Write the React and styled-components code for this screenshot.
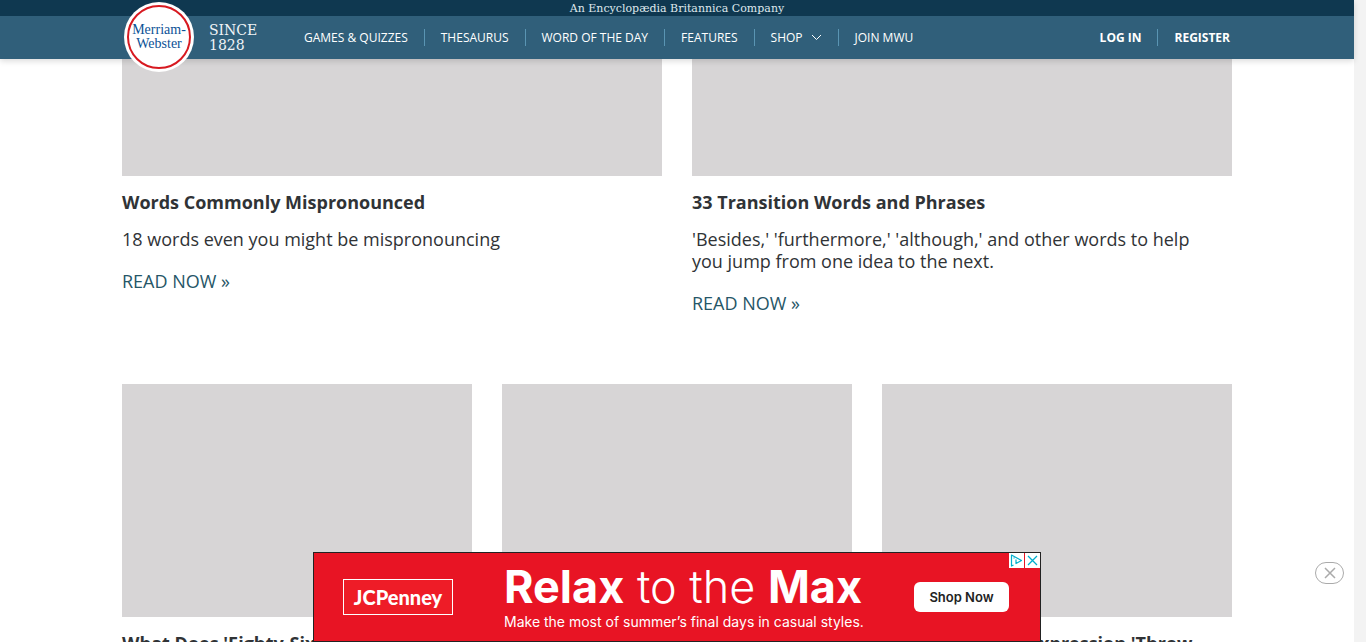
import React from "react";
import styled, { createGlobalStyle } from "styled-components";

const GlobalStyle = createGlobalStyle`
  *, *::before, *::after { box-sizing: border-box; }
  html, body { margin: 0; padding: 0; }
  body {
    background: #fff;
    color: #303336;
    font-family: "Open Sans", sans-serif;
    overflow: hidden;
  }
  a { color: inherit; text-decoration: none; }
  button { font: inherit; cursor: pointer; }
`;

const Shell = styled.div`
  display: grid;
  grid-template-columns: minmax(0, 1fr) 12px;
  height: 100vh;
  overflow: hidden;
`;

const Page = styled.div`
  min-width: 0;
`;

const ScrollTrack = styled.div`
  background: #f3f3f3;
`;

const Header = styled.header`
  position: relative;
  z-index: 2;
  background: #305f7a;
  box-shadow: 0 2px 6px rgba(0, 0, 0, 0.15);
`;

const TopStrip = styled.div`
  height: 16px;
  background: #0f3850;
  color: #dfe8ed;
  font-family: "DejaVu Serif", serif;
  font-size: 11px;
  line-height: 18px;
  text-align: center;
`;

const Bar = styled.div`
  display: flex;
  align-items: center;
  max-width: 1110px;
  height: 43px;
  margin: 0 auto;
  padding: 0 2px;
`;

const Logo = styled.a`
  display: flex;
  align-items: center;
  justify-content: center;
  width: 70px;
  height: 70px;
  flex: none;
  margin-bottom: 1px;
  border-radius: 50%;
  background: #fff;
`;

const LogoRing = styled.span`
  display: flex;
  flex-direction: column;
  align-items: center;
  justify-content: center;
  width: 64px;
  height: 64px;
  border: 2px solid #d71920;
  border-radius: 50%;
  color: #0b5296;
  font-family: "Liberation Serif", serif;
  font-size: 14px;
  line-height: 14px;
`;

const Since = styled.div`
  width: 80px;
  margin-left: 15px;
  color: #f0f4f6;
  font-family: "DejaVu Serif", serif;
  font-size: 14px;
  line-height: 15px;
`;

const NavList = styled.ul`
  display: flex;
  align-items: center;
  margin: 0;
  margin-left: ${(p) => (p.$end ? "auto" : "0")};
  padding: 0;
  list-style: none;
  color: #fff;
  font-size: 12px;
  font-weight: ${(p) => (p.$end ? 700 : 400)};
  line-height: 17px;
`;

const NavItem = styled.li`
  display: flex;
  padding: 0 16px;
  white-space: nowrap;

  & + & { border-left: 1px solid #5a95b3; }
  &:first-child { padding-left: 15px; }
  &:last-child { padding-right: 0; }
`;

const NavLink = styled.a`
  display: flex;
  align-items: center;
  gap: 8px;
`;

const Container = styled.main`
  max-width: 1110px;
  margin: 0 auto;
`;

const CardGrid = styled.section`
  display: grid;
  grid-template-columns: repeat(${(p) => p.$columns}, minmax(0, 1fr));
  gap: 30px;
  margin-bottom: 70px;
`;

const Thumb = styled.div`
  height: ${(p) => p.$height}px;
  background: #d7d5d6;
`;

const CardTitle = styled.h2`
  margin: 15px 0;
  font-size: 18px;
  font-weight: 700;
  line-height: 22px;
`;

const CardText = styled.p`
  margin: 0 0 20px;
  padding-right: 20px;
  font-size: 18px;
  line-height: 22px;
`;

const ReadLink = styled.a`
  display: block;
  color: #265667;
  font-size: 18px;
  line-height: 22px;
`;

const AdDock = styled.aside`
  position: fixed;
  right: 12px;
  bottom: 0;
  left: 0;
  z-index: 3;
  display: flex;
  justify-content: center;
`;

const Ad = styled.div`
  position: relative;
  display: flex;
  align-items: center;
  width: 728px;
  height: 90px;
  padding: 0 31px 0 29px;
  border: 1px solid #222;
  background: #e81424;
  color: #fff;
  font-family: Inter, sans-serif;
`;

const AdBrand = styled.div`
  display: flex;
  align-items: center;
  justify-content: center;
  width: 110px;
  height: 36px;
  border: 1px solid #fff;
  background: #ee1c27;
  font-family: Lato, sans-serif;
  font-size: 20px;
  font-weight: 900;
`;

const AdCopy = styled.div`
  flex: 1;
  margin-left: 51px;
  white-space: nowrap;
`;

const AdHeadline = styled.div`
  font-size: 45px;
  font-weight: 300;
  line-height: 50px;

  strong { font-weight: 700; }
`;

const AdTagline = styled.div`
  font-size: 14px;
  line-height: 20px;
`;

const AdButton = styled.button`
  width: 95px;
  height: 30px;
  padding: 0;
  border: 0;
  border-radius: 6px;
  background: #fff;
  color: #222;
  font-size: 13px;
  font-weight: 600;
`;

const AdControls = styled.div`
  position: absolute;
  top: 0;
  right: 0;
  display: flex;
  gap: 1px;
`;

const AdControl = styled.button`
  display: flex;
  width: 15px;
  height: 15px;
  padding: 0;
  border: 0;
  background: #fff;
`;

const DismissButton = styled.button`
  position: absolute;
  right: 10px;
  bottom: 58px;
  display: flex;
  align-items: center;
  justify-content: center;
  width: 29px;
  height: 22px;
  padding: 0;
  border: 1px solid #aaa;
  border-radius: 11px;
  background: #fff;
`;

const NAV = ["Games & Quizzes", "Thesaurus", "Word of the Day", "Features", "Shop", "Join MWU"];

const FEATURES = [
  { title: "Words Commonly Mispronounced", text: "18 words even you might be mispronouncing" },
  {
    title: "33 Transition Words and Phrases",
    text: "'Besides,' 'furthermore,' 'although,' and other words to help you jump from one idea to the next.",
  },
];

const STORIES = ["What Does 'Eighty-Six' Mean?", "", "Where Does the Expression 'Throw Shade' Come From?"];

function Chevron() {
  return (
    <svg width="11" height="7" viewBox="0 0 11 7" fill="none" stroke="#fff" aria-hidden="true">
      <path d="M1 1l4.500 4.500L10 1" />
    </svg>
  );
}

export default function App() {
  return (
    <>
      <GlobalStyle />
      <Shell>
        <Page>
          <Header>
            <TopStrip>An Encyclopædia Britannica Company</TopStrip>
            <Bar>
              <Logo href="#">
                <LogoRing>
                  <span>Merriam-</span>
                  <span>Webster</span>
                </LogoRing>
              </Logo>
              <Since>
                SINCE
                <br />
                1828
              </Since>
              <nav>
                <NavList>
                  {NAV.map((name) => (
                    <NavItem key={name}>
                      <NavLink href="#">
                        {name.toUpperCase()}
                        {name === "Shop" && <Chevron />}
                      </NavLink>
                    </NavItem>
                  ))}
                </NavList>
              </nav>
              <NavList $end>
                <NavItem><NavLink href="#">LOG IN</NavLink></NavItem>
                <NavItem><NavLink href="#">REGISTER</NavLink></NavItem>
              </NavList>
            </Bar>
          </Header>
          <Container>
            <CardGrid $columns={2}>
              {FEATURES.map((f) => (
                <article key={f.title}>
                  <Thumb $height={117} />
                  <CardTitle>{f.title}</CardTitle>
                  <CardText>{f.text}</CardText>
                  <ReadLink href="#">READ NOW »</ReadLink>
                </article>
              ))}
            </CardGrid>
            <CardGrid $columns={3}>
              {STORIES.map((title, i) => (
                <article key={i}>
                  <Thumb $height={233} />
                  {title && <CardTitle>{title}</CardTitle>}
                </article>
              ))}
            </CardGrid>
          </Container>
        </Page>
        <ScrollTrack />
      </Shell>
      <AdDock>
        <Ad>
          <AdBrand>JCPenney</AdBrand>
          <AdCopy>
            <AdHeadline><strong>Relax</strong> to the <strong>Max</strong></AdHeadline>
            <AdTagline>Make the most of summer’s final days in casual styles.</AdTagline>
          </AdCopy>
          <AdButton type="button">Shop Now</AdButton>
          <AdControls>
            <AdControl type="button" aria-label="Ad choices">
              <svg width="15" height="15" viewBox="0 0 15 15" fill="none" stroke="#00aecd" strokeWidth="1.200" strokeLinejoin="round">
                <path d="M4.500 12L2.500 13V2L12.500 7.500L7 10.500V6.500M5 4.500v1" />
              </svg>
            </AdControl>
            <AdControl type="button" aria-label="Close ad">
              <svg width="15" height="15" viewBox="0 0 15 15" fill="none" stroke="#00aecd" strokeWidth="1.300">
                <path d="M3 3l9 9M12 3l-9 9" />
              </svg>
            </AdControl>
          </AdControls>
        </Ad>
        <DismissButton type="button" aria-label="Dismiss">
          <svg width="12" height="12" viewBox="0 0 12 12" fill="none" stroke="#aaa" strokeWidth="1.500">
            <path d="M1 1l10 10M11 1L1 11" />
          </svg>
        </DismissButton>
      </AdDock>
    </>
  );
}
